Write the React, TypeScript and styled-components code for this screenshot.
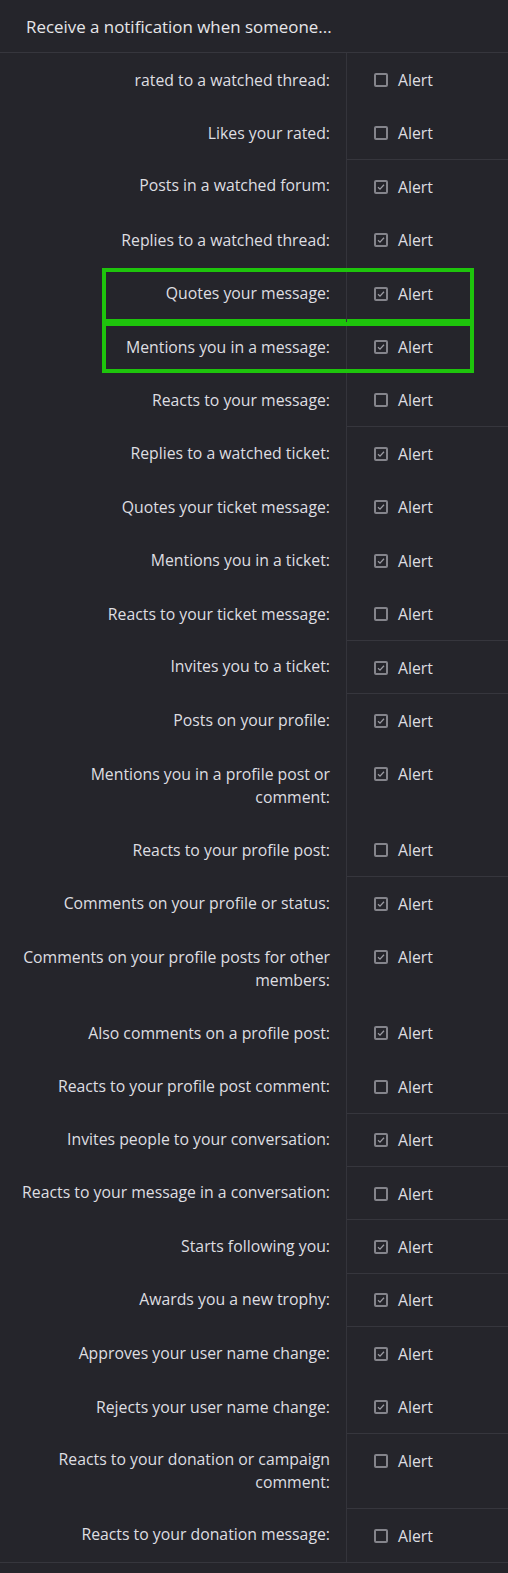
import React from 'react';
import styled, { createGlobalStyle } from 'styled-components';

const GlobalStyle = createGlobalStyle`
  html, body {
    margin: 0;
    padding: 0;
    background: #25252b;
  }
  body {
    font-family: "Open Sans", "Noto Sans", sans-serif;
    color: #dedee1;
  }
`;

// outline: how far the green highlight box reaches below the row
type Pref = { label: string; checked: boolean; outline?: number };

const groups: Pref[][] = [
  [
    { label: 'rated to a watched thread:', checked: false },
    { label: 'Likes your rated:', checked: false },
  ],
  [
    { label: 'Posts in a watched forum:', checked: true },
    { label: 'Replies to a watched thread:', checked: true },
    { label: 'Quotes your message:', checked: true, outline: 4 },
    { label: 'Mentions you in a message:', checked: true, outline: 0 },
    { label: 'Reacts to your message:', checked: false },
  ],
  [
    { label: 'Replies to a watched ticket:', checked: true },
    { label: 'Quotes your ticket message:', checked: true },
    { label: 'Mentions you in a ticket:', checked: true },
    { label: 'Reacts to your ticket message:', checked: false },
  ],
  [{ label: 'Invites you to a ticket:', checked: true }],
  [
    { label: 'Posts on your profile:', checked: true },
    { label: 'Mentions you in a profile post or comment:', checked: true },
    { label: 'Reacts to your profile post:', checked: false },
  ],
  [
    { label: 'Comments on your profile or status:', checked: true },
    { label: 'Comments on your profile posts for other members:', checked: true },
    { label: 'Also comments on a profile post:', checked: true },
    { label: 'Reacts to your profile post comment:', checked: false },
  ],
  [{ label: 'Invites people to your conversation:', checked: true }],
  [{ label: 'Reacts to your message in a conversation:', checked: false }],
  [{ label: 'Starts following you:', checked: true }],
  [{ label: 'Awards you a new trophy:', checked: true }],
  [
    { label: 'Approves your user name change:', checked: true },
    { label: 'Rejects your user name change:', checked: true },
  ],
  [{ label: 'Reacts to your donation or campaign comment:', checked: false }],
  [{ label: 'Reacts to your donation message:', checked: false }],
];

const Page = styled.div`
  padding-bottom: 20px;
`;

const Header = styled.h3`
  margin: 0;
  height: 52px;
  display: flex;
  align-items: center;
  padding: 0 26px;
  font-size: 16.9px;
  font-weight: 400;
  color: #e6e6e9;
  border-bottom: 1px solid #36363d;
`;

const List = styled.div`
  border-bottom: 1px solid #36363d;
`;

const Row = styled.dl<{ $outline?: number; $follow: boolean; $first: boolean }>`
  position: relative;
  margin: 0;
  display: grid;
  grid-template-columns: 347px 1fr;
  --top-pad: ${(p) => (p.$first ? '15.5px' : p.$follow ? '16.3px' : '15.3px')};

  ${(p) =>
    p.$outline !== undefined &&
    `
    &::after {
      content: '';
      position: absolute;
      top: 2.4px;
      bottom: -${p.$outline}px;
      left: 102px;
      right: 34px;
      border: 4px solid #1ec40c;
      pointer-events: none;
    }
  `}
`;

const Label = styled.dt`
  padding: var(--top-pad) 16px 14.65px 20px;
  text-align: right;
  font-size: 15.8px;
  line-height: 22.5px;
  color: #dedee1;
  border-right: 1px solid #34343b;
`;

const Option = styled.dd<{ $divided: boolean }>`
  margin: 0;
  padding: var(--top-pad) 0 14.65px 27px;
  border-top: ${(p) => (p.$divided ? '1px solid #36363d' : 'none')};
`;

const CheckLabel = styled.label`
  display: flex;
  align-items: center;
  gap: 10px;
  height: 22.5px;
  font-size: 15.8px;
  color: #dedee1;
`;

const Box = styled.span`
  box-sizing: border-box;
  width: 14px;
  height: 14px;
  border: 2px solid #84848b;
  border-radius: 2px;
  display: flex;
  align-items: center;
  justify-content: center;
`;

const CheckBox = ({ checked }: { checked: boolean }) => (
  <Box>
    {checked && (
      <svg width="8" height="8" viewBox="0 0 8 8">
        <path d="M1 4.2 L3 6.1 L7 1.8" fill="none" stroke="#9a9aa1" strokeWidth="1.3" />
      </svg>
    )}
  </Box>
);

export default function App() {
  return (
    <Page>
      <GlobalStyle />
      <Header>Receive a notification when someone...</Header>
      <List>
        {groups.map((group, gi) =>
          group.map((pref, ri) => (
            <Row
              key={`${gi}-${ri}`}
              $outline={pref.outline}
              $follow={ri > 0}
              $first={gi === 0 && ri === 0}
            >
              <Label>{pref.label}</Label>
              <Option $divided={gi > 0 && ri === 0}>
                <CheckLabel>
                  <CheckBox checked={pref.checked} />
                  Alert
                </CheckLabel>
              </Option>
            </Row>
          ))
        )}
      </List>
    </Page>
  );
}
